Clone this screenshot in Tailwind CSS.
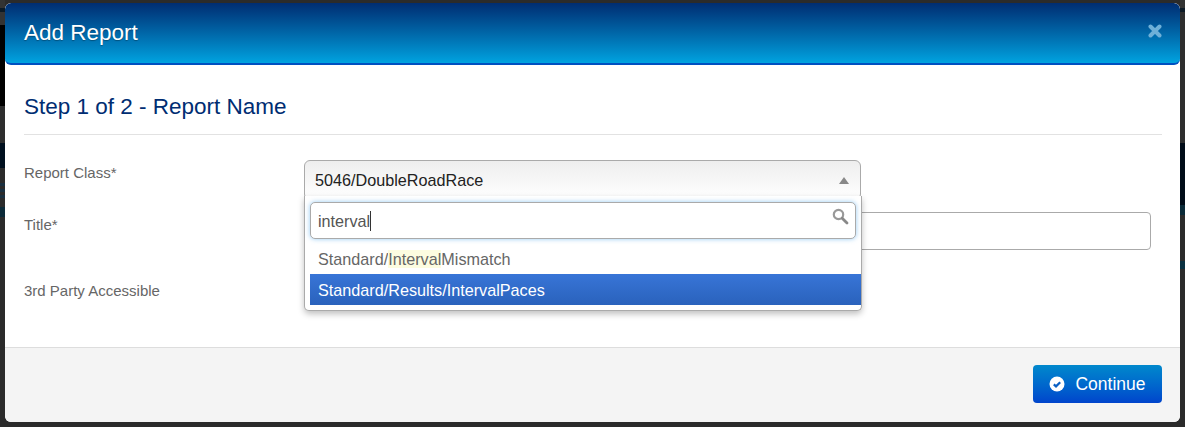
<!DOCTYPE html>
<html lang="en">
<head>
  <meta charset="UTF-8" />
  <title>Add Report</title>
  <script src="https://cdn.jsdelivr.net/npm/@tailwindcss/browser@4"></script>
</head>
<body class="relative h-[427px] bg-[#2b2b2b] font-['Liberation_Sans',Arial,sans-serif] overflow-hidden">

  <!-- Dimmed page showing behind the modal -->
  <div class="absolute left-0 top-0 w-[5px] h-full flex flex-col">
    <div class="h-[8px] bg-[#333]"></div>
    <div class="h-[4px] bg-[#0c1a26]"></div>
    <div class="h-[13px] bg-[#333]"></div>
    <div class="h-[81px] bg-black"></div>
    <div class="h-[37px] bg-[#2e2e2e]"></div>
    <div class="h-[25px] bg-[#00101f]"></div>
    <div class="h-[15px] bg-[#2b2b2b]"></div>
    <div class="h-[3px] bg-[#1a3040]"></div>
    <div class="h-[3px] bg-[#2b2b2b]"></div>
    <div class="h-[3px] bg-[#1a3040]"></div>
    <div class="h-[3px] bg-[#2b2b2b]"></div>
    <div class="h-[3px] bg-[#1a3040]"></div>
    <div class="h-[9px] bg-[#2b2b2b]"></div>
    <div class="h-[10px] bg-[#0c2a38]"></div>
  </div>
  <div class="absolute right-0 top-0 w-[5px] h-full flex flex-col">
    <div class="h-[8px] bg-[#333]"></div>
    <div class="h-[4px] bg-[#0c1a26]"></div>
    <div class="h-[131px] bg-[#2e2e2e]"></div>
    <div class="h-[62px] bg-[#000c18]"></div>
    <div class="h-[10px] bg-[#0a2a38]"></div>
    <div class="h-[46px] bg-[#2b2b2b]"></div>
    <div class="h-[8px] bg-[#0a3040]"></div>
  </div>

  <!-- Modal -->
  <div class="relative w-[1175px] h-[419px] ml-[5px] top-[3px] bg-white rounded-[6px] flex flex-col overflow-hidden">

    <!-- Header -->
    <div class="h-[62px] shrink-0 px-[19px] flex items-center justify-between rounded-[6px] border-b-2 border-[#0050c0] bg-gradient-to-b from-[#002d72] to-[#00a3e0]">
      <h1 class="text-[22.5px] text-white [text-shadow:0_1px_1px_rgba(0,0,0,0.3)]">Add Report</h1>
      <svg class="w-[14px] h-[14px] mr-[-1px] mb-[4px]" viewBox="0 0 14 14">
        <path d="M2.5 2.5 L11.5 11.5 M11.5 2.5 L2.5 11.5" stroke="#6fb0d8" stroke-width="4" stroke-linecap="round" />
      </svg>
    </div>

    <!-- Body -->
    <div class="flex-1 px-[19px]">
      <h2 class="text-[22.5px] leading-[26px] text-[#002d72] mt-[29px] pb-[14px] border-b border-[#e2e2e2] mr-[-1px] w-[1138px]">Step 1 of 2 - Report Name</h2>

      <!-- Report Class -->
      <div class="flex mt-[25px] h-[52px]">
        <label class="w-[280px] text-[15px] leading-[20px] text-[#666] pt-[3px]">Report Class*</label>
        <div class="relative">
          <div class="w-[557px] h-[40px] rounded-[6px] border border-[#aaa] bg-gradient-to-b from-[#eeeeee] to-white flex items-center justify-between pl-[10px] pr-[11px]">
            <span class="text-[16.2px] text-[#222]">5046/DoubleRoadRace</span>
            <span class="w-0 h-0 border-x-[5px] border-x-transparent border-b-[7px] border-b-[#888]"></span>
          </div>
          <!-- Dropdown -->
          <div class="absolute left-0 top-[36px] w-[558px] h-[115px] z-10 bg-white border border-[#aaa] border-t-0 rounded-b-[5px] shadow-[0_3px_6px_rgba(0,0,0,0.25)] px-[5px] pt-[6px]">
            <div class="h-[37px] w-[546px] rounded-[5px] border border-[#aaa] shadow-[0_0_5px_rgba(82,168,236,0.6)] flex items-center justify-between pl-[7px] pr-[6px] bg-white">
              <span class="text-[16.2px] text-[#555] border-r border-[#333] leading-[20px] pr-0">interval</span>
              <svg class="w-[17px] h-[17px] mt-[-8px]" viewBox="0 0 17 17" fill="none">
                <circle cx="6.5" cy="6.5" r="4.7" stroke="#999" stroke-width="2.2" />
                <path d="M10.2 10.2 L15 15" stroke="#888" stroke-width="2.8" stroke-linecap="round" />
              </svg>
            </div>
            <div class="w-[551px] mt-[4px] h-[31px] pl-[8px] pt-[2px] flex items-center text-[16.2px] text-[#666]">
              <span>Standard/<span class="bg-[#fcfce0]">Interval</span>Mismatch</span>
            </div>
            <div class="w-[551px] h-[31px] pl-[8px] pt-[2px] flex items-center text-[16.2px] text-white bg-gradient-to-b from-[#3875d7] to-[#2a62bc]">Standard/Results/IntervalPaces</div>
          </div>
        </div>
      </div>

      <!-- Title -->
      <div class="flex h-[66px]">
        <label class="w-[280px] text-[15px] leading-[20px] text-[#666] pt-[3px]">Title*</label>
        <div class="w-[847px] h-[38px] rounded-[4px] border border-[#aaa] bg-white"></div>
      </div>

      <!-- 3rd Party -->
      <div class="flex">
        <label class="w-[280px] text-[15px] leading-[20px] text-[#666] pt-[3px]">3rd Party Accessible</label>
      </div>
    </div>

    <!-- Footer -->
    <div class="h-[75px] shrink-0 bg-[#f4f4f4] border-t border-[#dddddd] flex justify-end items-start pr-[18px] pt-[17px]">
      <button class="w-[129px] h-[38px] rounded-[4px] bg-gradient-to-b from-[#0088cc] to-[#0044cc] text-white text-[17.5px] flex items-center justify-center gap-[10px]">
        <svg class="w-[16px] h-[16px]" viewBox="0 0 16 16">
          <circle cx="8" cy="8" r="7.5" fill="#fff" />
          <path d="M4.8 8.4 L7 10.4 L11.2 6.2" stroke="#0a60c4" stroke-width="2.2" fill="none" />
        </svg>
        Continue
      </button>
    </div>
  </div>

</body>
</html>
